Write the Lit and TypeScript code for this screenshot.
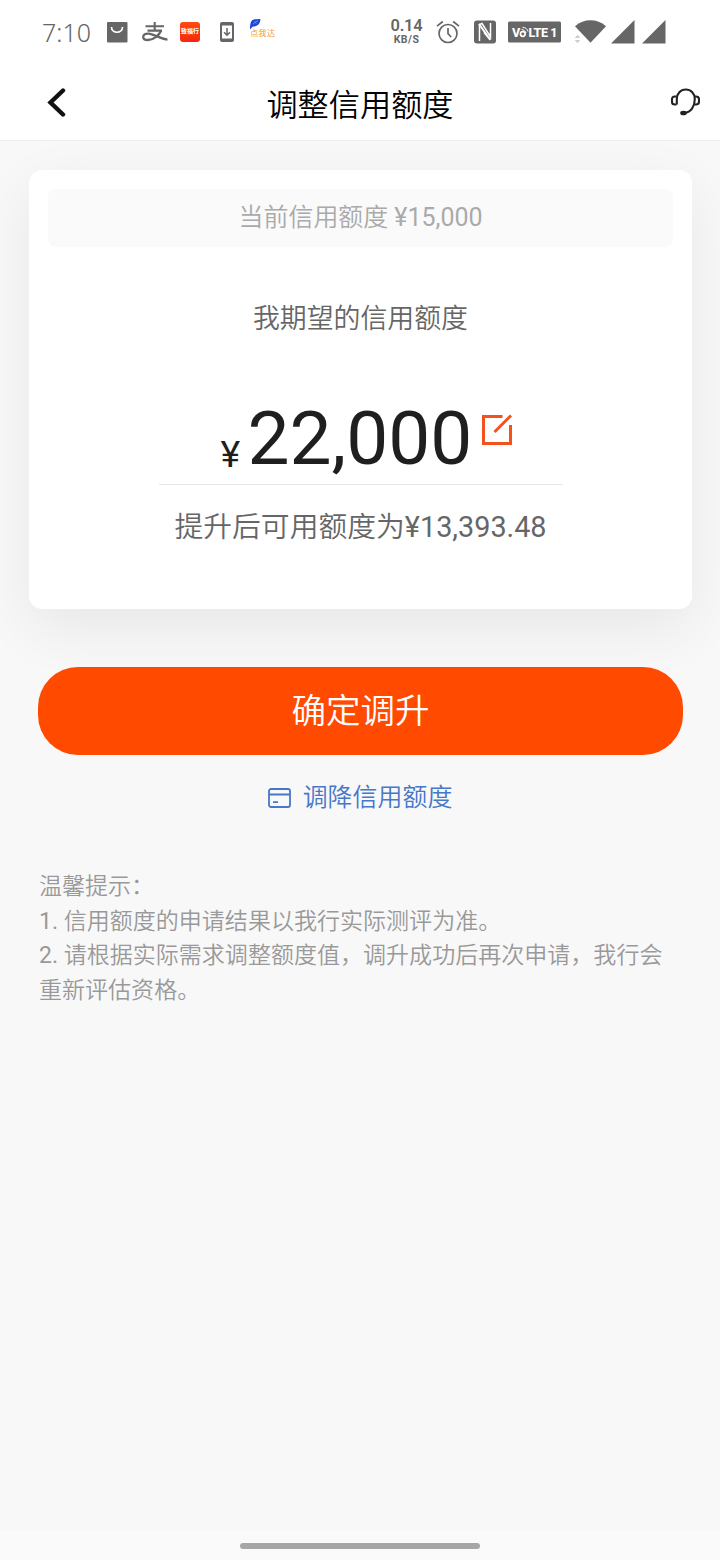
import { LitElement, html, css } from "lit";
import { customElement } from "lit/decorators.js";

@customElement("status-bar")
class StatusBar extends LitElement {
  static styles = css`
    :host {
      display: flex;
      justify-content: space-between;
      align-items: center;
      box-sizing: border-box;
      height: 65px;
      padding: 0 54.5px 1px 42px;
      background: #fff;
      color: #666;
    }
    svg { display: block; flex: none; }
    .side { display: flex; align-items: center; }
    .time {
      font: 400 25px/30px "Noto Sans", sans-serif;
      width: 64px;
      font-weight: 350;
      white-space: nowrap;
    }
    .alipay { margin-left: 14px; }
    .red {
      width: 20px;
      height: 20px;
      margin-left: 12px;
      border-radius: 3px;
      background: linear-gradient(#ff4a10, #f5280c);
      color: #fff;
      font: 700 6px/18px "Noto Sans CJK SC", sans-serif;
      text-align: center;
      white-space: nowrap;
    }
    .dl { margin-left: 20px; }
    .dwd { margin-left: 16px; width: 26px; height: 26px; margin-top: -2px; }
    .dwd svg { margin-top: 1px; }
    .dwd span {
      display: block;
      margin-top: -4px;
      color: #f2a034;
      font: 400 8.4px/12px "Noto Sans CJK SC", sans-serif;
      white-space: nowrap;
    }
    .speed {
      display: flex;
      flex-direction: column;
      align-items: center;
      width: 34px;
      font-family: Roboto, sans-serif;
      font-weight: 700;
      white-space: nowrap;
      margin-top: -1px;
    }
    .rate { font-size: 16.5px; line-height: 16px; font-weight: 600; letter-spacing: -0.2px; }
    .unit { font-size: 10.5px; line-height: 11px; letter-spacing: 0.5px; }
    .alarm { margin-left: 12px; }
    .nfc { margin-left: 14px; }
    .volte { margin-left: 12px; }
    .wifi { margin-left: 13px; }
    .sig { margin-left: 3px; }
    .sig2 { margin-left: 7px; }
    .badge { font: 800 12.5px Roboto, sans-serif; fill: #fff; }
  `;

  render() {
    return html`
      <div class="side">
        <span class="time">7:10</span>
        <svg width="22" height="22" viewBox="0 0 22 22">
          <rect x="1" y="1" width="20.5" height="20.5" rx="1" fill="#666" />
          <path d="M5.5 6c0 7 11 7 11 0" fill="none" stroke="#fff" stroke-width="1.7" />
        </svg>
        <svg class="alipay" width="26" height="22" viewBox="0 0 26 22" fill="none" stroke="#666">
          <path d="M3.500 5.200h18.500M12.700 1v8.500M5.500 9.600h14.500" stroke-width="2.100" />
          <path d="M19.200 9.500C17 14.500 11.500 19 6 19c-3 0-4.800-1.200-4.800-3.100 0-2.300 2.500-3.400 5.300-3.200C12 13 17 17.500 25.500 18.600" stroke-width="2.300" />
        </svg>
        <div class="red">致福行</div>
        <svg class="dl" width="14" height="20" viewBox="0 0 14 20">
          <path fill="#666" fill-rule="evenodd" d="M2 0h10a2 2 0 0 1 2 2v16a2 2 0 0 1-2 2H2a2 2 0 0 1-2-2V2a2 2 0 0 1 2-2zM2 3.500v13h10v-13z" />
          <path d="M7 6v7M4 10.300l3 3 3-3" fill="none" stroke="#666" stroke-width="1.500" />
        </svg>
        <div class="dwd">
          <svg width="12" height="11" viewBox="0 0 12 11">
            <path d="M0 10.500C0 4 1 .5 5 .3L10.500 0C10 5.500 7 7.500 2.500 7.700z" fill="#2048d8" />
            <path d="M3 5l5-3.500M4.500 2.500l2 2" stroke="#89a6f5" stroke-width=".7" />
          </svg>
          <span>点我达</span>
        </div>
      </div>
      <div class="side">
        <div class="speed"><span class="rate">0.14</span><span class="unit">KB/S</span></div>
        <svg class="alarm" width="24" height="24" viewBox="0 0 24 24" fill="none" stroke="#666" stroke-width="1.700">
          <circle cx="12" cy="13.500" r="9" />
          <path d="M12 8v5.700l3.200 3.300M1 6.200l5.800-4.700M23 6.200l-5.800-4.700" />
        </svg>
        <svg class="nfc" width="22" height="24" viewBox="0 0 22 24">
          <rect width="22" height="23" y=".5" rx="3" fill="#666" />
          <path d="M5.500 21V4.500L8 3.500 16.500 17V3M5.500 5.500V20M10 12.500L16.500 20" fill="none" stroke="#fff" stroke-width="1.500" />
          <path d="M5 4l11 15.500" stroke="#fff" stroke-width="2" />
        </svg>
        <svg class="volte" width="53" height="22" viewBox="0 0 53 22">
          <rect width="53" height="21" y=".5" rx="1.500" fill="#666" />
          <text class="badge" x="4" y="15.700" textLength="9">V</text>
          <circle cx="14.800" cy="13" r="2.300" fill="none" stroke="#fff" stroke-width="1.700" />
          <path d="M13.500 8.500c2 0 4 1.500 4.500 3.500M14.500 6.300c3 0 5 2 5.500 4.200" fill="none" stroke="#fff" stroke-width="1" />
          <text class="badge" x="20.500" y="15.700" textLength="29">LTE 1</text>
        </svg>
        <svg class="wifi" width="34" height="24" viewBox="0 0 34 24">
          <path d="M1 6.200C10-1.600 23-1.600 32 6.200L16.500 22.800z" fill="#666" />
          <path d="M.8 18l2.700-3.200L6.200 18zM.8 20l2.700 3.200L6.200 20z" fill="#ccc" />
        </svg>
        <svg class="sig" width="24" height="24" viewBox="0 0 24 24"><path d="M23.500 0v23.500H0z" fill="#666" /></svg>
        <svg class="sig2" width="24" height="24" viewBox="0 0 24 24"><path d="M23.500 0v23.500H0z" fill="#666" /></svg>
      </div>
    `;
  }
}

@customElement("app-root")
class AppRoot extends LitElement {
  static styles = css`
    :host {
      display: flex;
      flex-direction: column;
      box-sizing: border-box;
      width: 720px;
      height: 1560px;
      overflow: hidden;
      background: #f8f8f8;
      font-family: Roboto, "Noto Sans CJK SC", sans-serif;
      font-weight: 350;
      color: #666;
    }
    svg { display: block; flex: none; }
    .num { font-weight: 400; }
    status-bar { flex: none; }
    header {
      display: grid;
      grid-template-columns: 100px 1fr 100px;
      align-items: center;
      height: 75px;
      flex: none;
      background: #fff;
      border-bottom: 1px solid #eee;
    }
    .back { margin-left: 46px; margin-top: -1px; }
    .service { margin-left: 50px; margin-top: -2px; }
    h1 {
      margin: 6px 0 0;
      font-size: 31.2px;
      line-height: 44px;
      font-weight: 350;
      color: #000;
      text-align: center;
    }
    main { flex: 1; overflow: hidden; }
    .card {
      box-sizing: border-box;
      height: 439px;
      margin: 29px 28px 0 29px;
      padding: 19px 19px 0;
      border-radius: 13px;
      background: #fff;
      box-shadow: 0 19px 58px rgba(0, 0, 0, 0.07);
      display: flex;
      flex-direction: column;
      align-items: center;
    }
    .current {
      align-self: stretch;
      height: 58px;
      border-radius: 8px;
      background: #fafafa;
      color: #aaa;
      font-size: 24.96px;
      line-height: 58px;
      text-align: center;
    }
    .label { margin-top: 52px; font-size: 26.88px; line-height: 40px; }
    .amount {
      display: flex;
      box-sizing: border-box;
      width: 404px;
      height: 101px;
      margin-top: 45px;
      padding-left: 62px;
      border-bottom: 1.500px solid #e6e6e6;
      color: #1f1f1f;
      font-weight: 400;
      white-space: nowrap;
    }
    .yen { width: 27px; font-size: 37.5px; line-height: 40px; margin-top: 50px; }
    .value { width: 225px; font-size: 74.8px; line-height: 88px; margin-top: 11px; }
    .edit { margin: 30px 0 0 8px; }
    .after { margin-top: 21px; font-size: 28.8px; line-height: 42px; }
    .confirm {
      display: block;
      width: 645px;
      height: 88px;
      margin: 58px 0 0 38px;
      padding: 0 0 5px;
      border: 0;
      border-radius: 40px;
      background: #ff4a00;
      color: #fff;
      font: 350 34.56px/83px "Noto Sans CJK SC", sans-serif;
    }
    .lower {
      display: flex;
      justify-content: center;
      align-items: center;
      gap: 12px;
      margin-top: 24px;
      color: #4677c8;
      font-size: 24.96px;
      line-height: 38px;
    }
    .lower svg { margin-top: -1px; }
    .tips {
      margin: 53px 38px 0 39px;
      color: #999;
      font-size: 23.04px;
      line-height: 34.56px;
    }
    .tips p { margin: 0; }
    .item::first-letter { font-weight: 400; }
    .nav {
      flex: none;
      display: flex;
      justify-content: center;
      height: 30px;
      background: #fafafa;
    }
    .pill { width: 240px; height: 6px; margin-top: 13px; border-radius: 3px; background: #a6a6a6; }
  `;

  render() {
    return html`
      <status-bar></status-bar>
      <header>
        <svg class="back" width="22" height="30" viewBox="0 0 22 30">
          <path d="M17 3.500L4.500 15.500 17 27.500" fill="none" stroke="#111" stroke-width="4.400" stroke-linecap="round" />
        </svg>
        <h1>调整信用额度</h1>
        <svg class="service" width="30" height="30" viewBox="0 0 30 30" fill="none" stroke="#222" stroke-width="2.100">
          <path d="M6.800 17.500V12C6.800 6.500 10.500 2.500 15.800 2.500S24.800 6.500 24.800 12c0 7-3.500 13.500-10.500 14" />
          <path d="M6.600 9.500H4.800Q2 9.500 2 12.300v2.400Q2 17.500 4.800 17.500h1.800M25 9.500h1Q29 9.500 29 12.300v2.400Q29 17.500 26 17.500H24" />
          <ellipse cx="13.500" cy="26" rx="2.300" ry="1.300" fill="#222" />
        </svg>
      </header>
      <main>
        <section class="card">
          <div class="current">当前信用额度 <span class="num">¥15,000</span></div>
          <div class="label">我期望的信用额度</div>
          <div class="amount">
            <span class="yen">¥</span>
            <span class="value">22,000</span>
            <svg class="edit" width="32" height="32" viewBox="0 0 32 32" fill="none" stroke="#f4511e" stroke-width="3">
              <path d="M21.500 2.500H2.500v27h27v-18.500M13.500 18L30 1.500" />
            </svg>
          </div>
          <div class="after">提升后可用额度为<span class="num">¥13,393.48</span></div>
        </section>
        <button class="confirm">确定调升</button>
        <div class="lower">
          <svg width="23" height="20" viewBox="0 0 23 20" fill="none" stroke="#4677c8" stroke-width="1.800">
            <rect x="1" y="1" width="21" height="18" rx="2" />
            <path d="M1 6.500h21M5 14.200h5" />
          </svg>
          <span>调降信用额度</span>
        </div>
        <section class="tips">
          <p>温馨提示：</p>
          <p class="item">1. 信用额度的申请结果以我行实际测评为准。</p>
          <p class="item">2. 请根据实际需求调整额度值，调升成功后再次申请，我行会重新评估资格。</p>
        </section>
      </main>
      <div class="nav"><div class="pill"></div></div>
    `;
  }
}
